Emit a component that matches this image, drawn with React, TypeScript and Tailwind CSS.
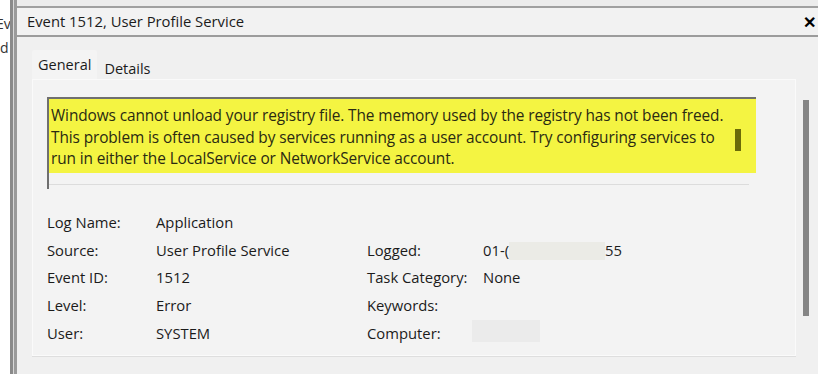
import React from "react";

const font = { fontFamily: '"Open Sans", "Noto Sans", Arial, sans-serif' };

const left = [
  ["Log Name:", "Application"],
  ["Source:", "User Profile Service"],
  ["Event ID:", "1512"],
  ["Level:", "Error"],
  ["User:", "SYSTEM"],
];

export default function App() {
  return (
    <div className="flex h-[374px] w-[818px] overflow-hidden bg-white text-[#1b1b1b]" style={font}>
      {/* edge of the main window behind */}
      <div className="flex w-[17px] shrink-0">
        <div className="w-[10px] overflow-hidden pt-[12px] text-[14px] leading-[24px] text-[#333]">
          <div className="-ml-[4px]">Ev</div>
          <div>d</div>
        </div>
        <div className="w-[3px] bg-[#8a8a8a]" />
        <div className="w-[1px] bg-[#d8d8d8]" />
        <div className="w-[3px] bg-[#9a9a9a]" />
      </div>

      <div className="flex min-w-0 flex-1 flex-col bg-[#f0f0f0]">
        <div className="h-[6px] bg-[#ececec]" />
        <div className="h-[2px] bg-[#a0a0a0]" />
        <div className="flex h-[27px] items-center justify-between bg-[#f2f2f2] pl-[10px] pr-[2px] text-[14.8px]">
          <span>Event 1512, User Profile Service</span>
          <span className="text-[16px] font-bold leading-none text-black">✕</span>
        </div>
        <div className="h-[2px] bg-[#9c9c9c]" />

        <div className="flex flex-1 pl-[15px] pt-[13px]">
          <div className="flex w-[764px] flex-col">
            <div className="flex h-[29px] items-end text-[14.5px]">
              <div className="flex h-[29px] items-center rounded-t-[2px] bg-[#f4f4f4] px-[6px]">General</div>
              <div className="flex h-[24px] items-center px-[7px] pt-[4px]">Details</div>
            </div>
            <div className="flex h-[277px] flex-col overflow-hidden border border-[#fafafa] bg-[#f3f3f3] pl-[14px] pt-[17px]">
              <div className="h-[92px] w-[709px] shrink-0 border-t-2 border-l-2 border-[#6f6f6f]">
                <div className="relative w-[707px] bg-[#f4f442] pb-[3px] pl-[2px] pt-[6px] text-[15.4px] leading-[21.5px] tracking-[-0.1px] text-[#2a2a12]">
                  <p className="whitespace-nowrap">
                    Windows cannot unload your registry file. The memory used by the registry has not been freed.
                    <br />
                    This problem is often caused by services running as a user account. Try configuring services to
                    <br />
                    run in either the LocalService or NetworkService account.
                  </p>
                  <div className="absolute left-[686px] top-[30px] h-[22px] w-[6px] bg-[#6b6b08]" />
                </div>
                <div className="h-[1px] w-[700px] translate-y-[11px] bg-[#dcdcdc]" />
              </div>

              <div className="mt-[20px] flex shrink-0 text-[14.8px] leading-[27.7px]">
                <div className="w-[109px]">
                  {left.map(([k]) => (
                    <div key={k}>{k}</div>
                  ))}
                  <div className="leading-[14px] text-[#777]">· · ·</div>
                </div>
                <div className="w-[211px]">
                  {left.map(([k, v]) => (
                    <div key={k}>{v}</div>
                  ))}
                </div>
                <div className="w-[116px]">
                  <div>&nbsp;</div>
                  <div>Logged:</div>
                  <div>Task Category:</div>
                  <div>Keywords:</div>
                  <div>Computer:</div>
                </div>
                <div>
                  <div>&nbsp;</div>
                  <div className="flex items-center">
                    <span>01-(</span>
                    <span className="h-[18px] w-[96px] bg-[#ebebe6]" />
                    <span>55</span>
                  </div>
                  <div>None</div>
                  <div>&nbsp;</div>
                  <div className="flex items-center">
                    <span className="-ml-[11px] h-[22px] w-[68px] bg-[#ebebeb]" />
                  </div>
                </div>
              </div>
            </div>
            <div className="h-[1px] bg-[#dedede]" />
          </div>
          <div className="ml-[7px] pt-[50px]">
            <div className="h-[216px] w-[6px] bg-[#858585]" />
          </div>
        </div>
      </div>
    </div>
  );
}
